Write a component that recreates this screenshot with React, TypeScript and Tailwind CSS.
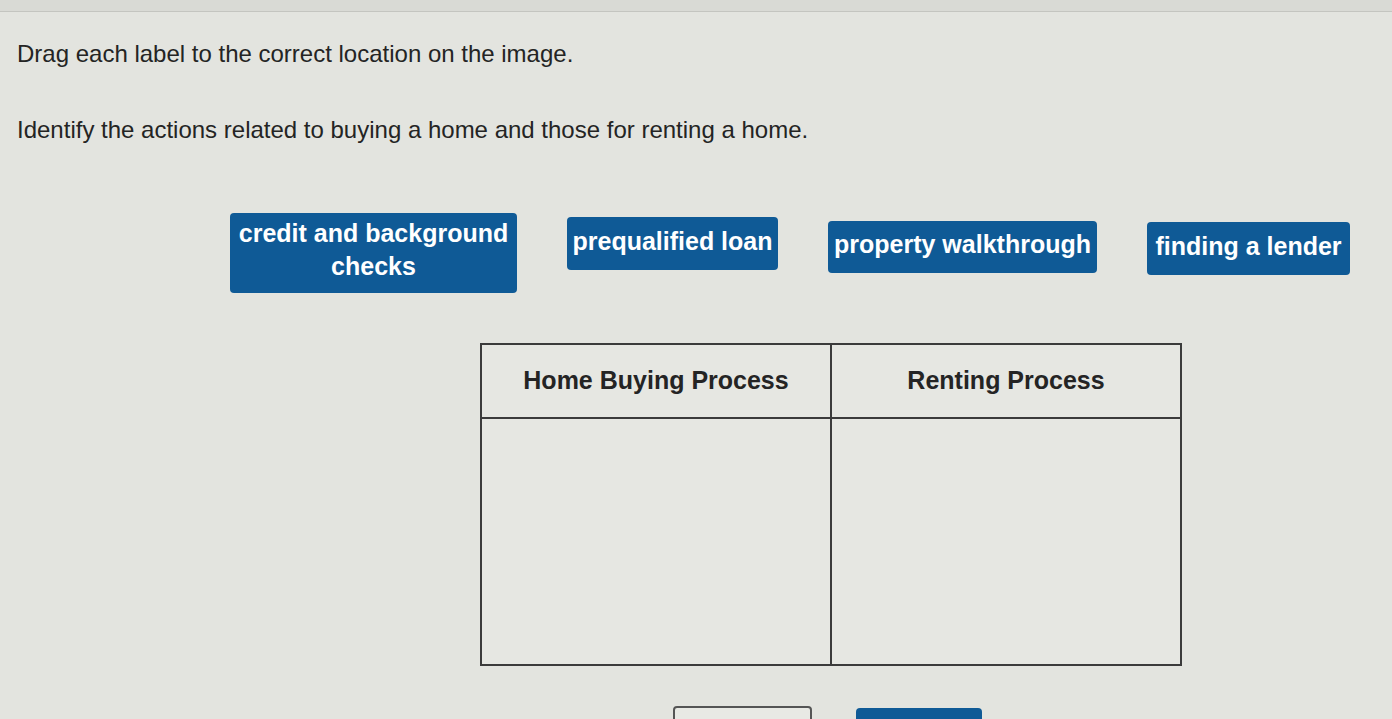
const labels = [
  { text: 'credit and background checks', width: 'w-[287px] h-[80px] mt-0', leading: 'leading-[33px]' },
  { text: 'prequalified loan', width: 'w-[211px] h-[53px] mt-[4px]', leading: 'leading-[30px]' },
  { text: 'property walkthrough', width: 'w-[269px] h-[52px] mt-[8px]', leading: 'leading-[30px]' },
  { text: 'finding a lender', width: 'w-[203px] h-[53px] mt-[9px]', leading: 'leading-[30px]' },
];

function DragLabel({ text, width, leading }: { text: string; width: string; leading: string }) {
  return (
    <div
      className={`${width} ${leading} flex items-center justify-center rounded-[4px] bg-[#0f5a96] px-[5px] pb-[6px] text-center text-[25px] font-bold text-white`}
    >
      {text}
    </div>
  );
}

export default function App() {
  return (
    <div
      className="h-[719px] w-[1392px] overflow-hidden bg-[#e3e4df] text-[#242424]"
      style={{ fontFamily: '"Liberation Sans", Arial, sans-serif' }}
    >
      {/* top edge of the frame */}
      <div className="h-[12px] border-b border-[#c4c5c0] bg-[#d9dad5]" />

      <p className="mt-[28px] pl-[17px] text-[24px] leading-[28px]">
        Drag each label to the correct location on the image.
      </p>
      <p className="mt-[48px] pl-[17px] text-[24px] leading-[28px]">
        Identify the actions related to buying a home and those for renting a home.
      </p>

      {/* draggable labels */}
      <div className="mt-[69px] flex items-start gap-[50px] pl-[230px]">
        {labels.map((l) => (
          <DragLabel key={l.text} {...l} />
        ))}
      </div>

      {/* drop target table */}
      <div className="ml-[480px] mt-[50px] grid h-[323px] w-[702px] grid-cols-[350px_1fr] grid-rows-[74px_1fr] border-2 border-[#3b3b3b] bg-[#e6e7e2]">
        <div className="flex items-center justify-center border-b-2 border-r-2 border-[#3b3b3b] text-[25px] font-bold">
          Home Buying Process
        </div>
        <div className="flex items-center justify-center border-b-2 border-[#3b3b3b] text-[25px] font-bold">
          Renting Process
        </div>
        <div className="border-r-2 border-[#3b3b3b]" />
        <div />
      </div>

      {/* action buttons */}
      <div className="mt-[40px] flex items-start gap-[44px] pl-[673px]">
        <div className="h-[40px] w-[139px] rounded-[4px] border-2 border-[#555] bg-[#e8e9e4]" />
        <div className="mt-[2px] h-[40px] w-[126px] rounded-[4px] bg-[#0f5a96]" />
      </div>
    </div>
  );
}
